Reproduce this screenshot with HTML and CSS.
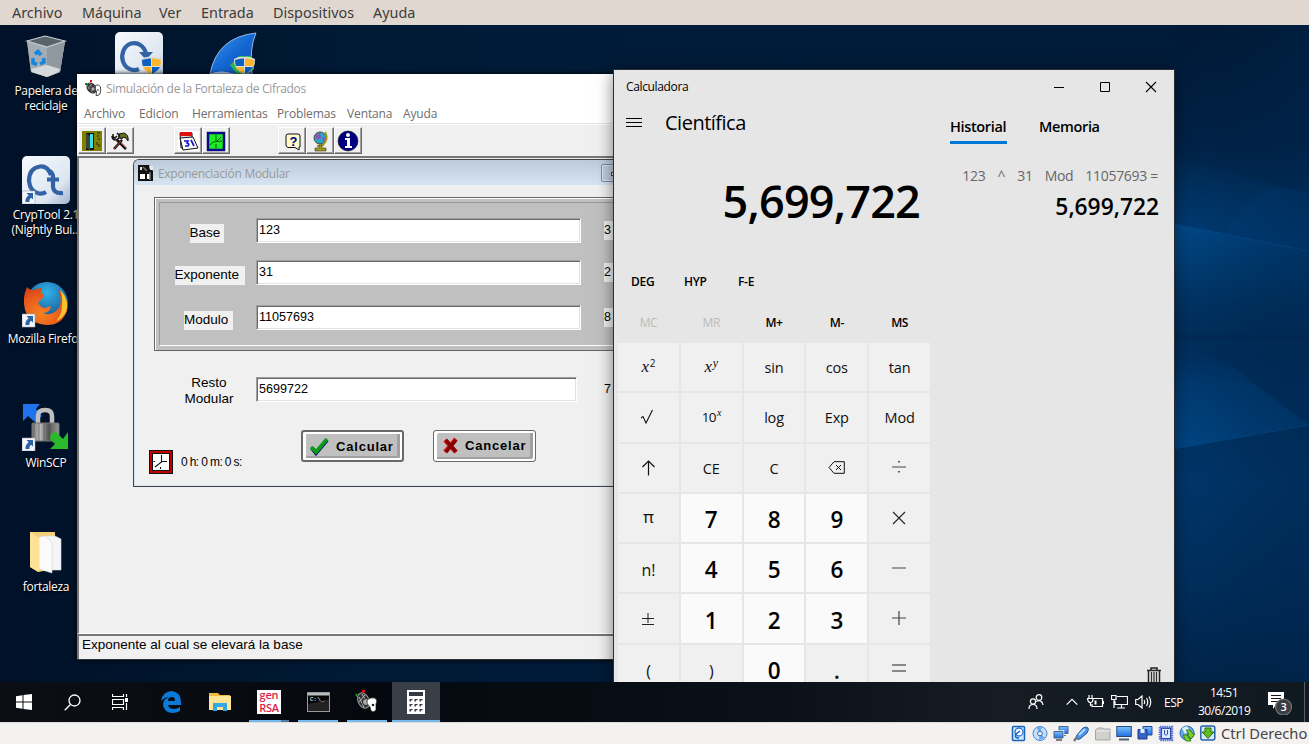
FILE: index.html
```html
<!DOCTYPE html>
<html lang="es">
<head>
<meta charset="utf-8">
<title>Máquina virtual</title>
<link rel="stylesheet" href="styles.css">
</head>
<body>
<svg class="defs" width="0" height="0">
  <defs>
    <linearGradient id="sky" x1="0" x2="1" y1="0" y2="0"><stop offset="0" stop-color="#001128"/><stop offset=".3" stop-color="#001a36"/><stop offset=".6" stop-color="#001c3a"/><stop offset="1" stop-color="#001b38"/></linearGradient>
    <linearGradient id="side" x1="0" x2="0" y1="0" y2="1"><stop offset="0" stop-color="#001935"/><stop offset=".18" stop-color="#002248"/><stop offset=".3" stop-color="#003463"/><stop offset=".5" stop-color="#002e5d"/><stop offset=".7" stop-color="#00376c"/><stop offset=".85" stop-color="#002f5e"/><stop offset="1" stop-color="#00244a"/></linearGradient>
    <linearGradient id="beam1" x1="0" x2="0" y1="0" y2="1"><stop offset="0" stop-color="#004a8c"/><stop offset=".5" stop-color="#004078" stop-opacity=".7"/><stop offset="1" stop-color="#003468" stop-opacity="0"/></linearGradient>
    <linearGradient id="beam2" x1="0" x2="0" y1="1" y2="0"><stop offset="0" stop-color="#004787"/><stop offset=".6" stop-color="#00407a" stop-opacity=".7"/><stop offset="1" stop-color="#003468" stop-opacity="0"/></linearGradient>
    <linearGradient id="haze" x1="0" x2="0" y1="0" y2="1"><stop offset="0" stop-color="#003b73" stop-opacity="0"/><stop offset="1" stop-color="#003e79"/></linearGradient>
    <linearGradient id="fade" x1="0" x2="1" y1="0" y2="0"><stop offset="0" stop-color="#001b38" stop-opacity="0"/><stop offset="1" stop-color="#00234a" stop-opacity=".5"/></linearGradient>
    <linearGradient id="tile" x1="0" x2="1" y1="0" y2="1"><stop offset="0" stop-color="#f7fafd"/><stop offset=".7" stop-color="#dde6f1"/><stop offset="1" stop-color="#9fb3cd"/></linearGradient>
    <linearGradient id="fin" x1="0" x2="1" y1="0" y2="1"><stop offset="0" stop-color="#3e9bf0"/><stop offset=".5" stop-color="#1468d2"/><stop offset="1" stop-color="#0c4db0"/></linearGradient>
    <linearGradient id="lock" x1="0" x2="1" y1="0" y2="0"><stop offset="0" stop-color="#777"/><stop offset=".3" stop-color="#bbb"/><stop offset=".6" stop-color="#555"/><stop offset="1" stop-color="#999"/></linearGradient>
    <radialGradient id="fox" cx=".4" cy=".7" r=".8"><stop offset="0" stop-color="#f58220"/><stop offset=".6" stop-color="#e8591c"/><stop offset="1" stop-color="#c93a12"/></radialGradient>
    <radialGradient id="globe" cx=".5" cy=".25" r=".8"><stop offset="0" stop-color="#2fb4ea"/><stop offset="1" stop-color="#153a7c"/></radialGradient>
    <linearGradient id="blu" x1="0" x2="0" y1="0" y2="1"><stop offset="0" stop-color="#7cc0ff"/><stop offset="1" stop-color="#1d6fe0"/></linearGradient>
    <g id="shield"><path d="M0 2Q6-1 10.500 0Q15-1 21 2Q22 12 10.500 18Q-1 12 0 2Z" fill="#ddd"/><path d="M1 3Q6 1 10 1.500V9H1.800Q1 6 1 3ZM11 10H19Q17 14 11 17Z" fill="#fdb62b" transform="translate(21) scale(-1 1)"/><path d="M1 3Q6 1 10 1.500V9H1.800Q1 6 1 3ZM11 10H19Q17 14 11 17Z" fill="#0a5fc0"/></g>
    <g id="shortcut"><rect width="13" height="13" fill="#f5f7fa" stroke="#9aa4b0" stroke-width=".6"/><path d="M4.500 2H11V8.500L9 6.800Q7 8 7.400 11H3.500Q3 7 6.600 4.300Z" fill="#2a63a8"/></g>
    <g id="machine"><ellipse cx="6.500" cy="8" rx="4.500" ry="6" transform="rotate(-35 6.500 8)" fill="#333"/><path d="M2 5L8 13M4 3L10 11M3 9L7 4M6 12L10 6" stroke="#999" stroke-width=".8"/><circle cx="8" cy="9" r="2.200" fill="#aaa" stroke="#222" stroke-width=".8"/><path d="M10.500 5.500Q14 3.500 15.500 7Q16 10 15 14Q13 16 11 15.500L11.500 12Q9.500 9 10.500 5.500Z" fill="#fff" stroke="#333" stroke-width=".9"/><circle cx="13" cy="10" r=".8" fill="#222"/><rect x="0" y="3" width="2" height="2" fill="#087a12"/><rect x="5" y="0" width="2" height="2" fill="#d11"/></g>
  </defs>
</svg>

<nav class="vm-menu"><span class="m1">Archivo</span><span class="m2">Máquina</span><span class="m3">Ver</span><span class="m4">Entrada</span><span class="m5">Dispositivos</span><span>Ayuda</span></nav>

<main class="desktop">
  <svg class="wallpaper" width="1309" height="657" viewBox="0 25 1309 657">
    <rect y="25" width="1309" height="657" fill="url(#sky)"/>
    <rect x="1174" y="25" width="135" height="657" fill="url(#side)"/>
    <path d="M1174 155L1309 195V253L1174 225Z" fill="url(#haze)"/>
    <path d="M1228 225L1264 188L1309 190V252L1232 237Z" fill="#00478a" opacity=".25"/>
    <path d="M1174 224L1309 251V330H1174Z" fill="url(#beam1)"/>
    <path d="M1174 340L1230 365L1309 425L1174 449Z" fill="url(#beam2)"/>
    <path d="M1174 335H1309V339H1174Z" fill="#00264f" opacity=".5"/>
    <path d="M1174 25H1309V682H1174Z" fill="url(#fade)"/>
    <path d="M1174 224L1309 251M1174 449L1309 425" stroke="#0a5798" stroke-width="1" opacity=".35"/>
  </svg>

  <div class="shortcut bin">
    <svg width="48" height="48" viewBox="0 0 48 48"><path d="M5 8L23 3L43 8L38 39L25 44L9 39Z" fill="#8c949b"/><path d="M5 8L25 14L43 8L38 39L25 44L9 39Z" fill="#a5adb4"/><path d="M25 14L43 8L38 39L25 44Z" fill="#8f979f"/><path d="M9 36L25 32L38 36L37 39L25 44L10 39Z" fill="#d6d9dc"/><path d="M5 8L23 3L43 8L25 14Z" fill="#59636c" stroke="#c5cbd0" stroke-width="1.200"/><path d="M13 21L16 18.500L19 22M11 25L11 30L15 31.500M18 31L22 29L21.500 25" fill="none" stroke="#1686dd" stroke-width="3.600"/></svg>
    <p>Papelera de<br>reciclaje</p>
  </div>
  <div class="shortcut top1"><svg width="48" height="48" viewBox="0 0 48 48"><rect width="48" height="48" rx="5" fill="url(#tile)"/><path d="M31 22A12 13.500 0 1 0 24 37" fill="none" stroke="#3463a5" stroke-width="4.200"/><path d="M24 20H38L31 28Z" fill="#3463a5"/><use href="#shield" x="26" y="25"/></svg></div>
  <div class="shortcut top2"><svg width="48" height="48" viewBox="0 0 48 48"><path d="M1 42Q8 5 47 1Q40 17 43 42Z" fill="url(#fin)" stroke="#b7d4f2" stroke-width=".8"/><path d="M0 42Q12 37 26 42Z" fill="#bcd3ef"/><path d="M21 33L30 24H43L45 37L38 42H28Z" fill="#29b44b"/><use href="#shield" x="25" y="25"/></svg></div>
  <div class="shortcut crypt">
    <svg width="48" height="48" viewBox="0 0 48 48"><rect width="48" height="48" rx="5" fill="url(#tile)"/><path d="M29 19Q26 10 18 10.500Q7 12 7 25Q8 36 17 37.500Q21 38 24 36M25 14Q30 15 31 20V31Q32 38 41 37M25 23.500H37" fill="none" stroke="#3463a5" stroke-width="4.200"/><use href="#shortcut" x="0" y="35"/></svg>
    <p>CrypTool 2.1<br>(Nightly Bui...</p>
  </div>
  <div class="shortcut firefox">
    <svg width="48" height="48" viewBox="0 0 48 48"><circle cx="25" cy="23" r="21" fill="url(#globe)"/><path d="M5 7Q9 12 14 9L20 8Q17 12 22 15L20 19L16 22Q18 28 24 28Q28 25 29 27Q27 33 21 33Q29 37 37 28Q41 20 36 10Q48 18 45 31Q40 45 25 45Q8 44 3 30Q0 17 5 7Z" fill="url(#fox)"/><path d="M38 10Q48 19 44 32Q40 39 34 41Q40 35 40 26Q41 18 38 10Z" fill="#f8c22c"/><use href="#shortcut" x="0" y="34"/></svg>
    <p>Mozilla Firefox</p>
  </div>
  <div class="shortcut winscp">
    <svg width="48" height="48" viewBox="0 0 48 48"><path d="M1 1H18L14 6L20 13L13 19L6 13L1 18Z" fill="#1f74ee"/><path d="M16 22V13Q16 7 23 7Q30 7 30 13V22" fill="none" stroke="#bfbfbf" stroke-width="4.500"/><rect x="10" y="20" width="27" height="18" rx="1" fill="url(#lock)" stroke="#777"/><path d="M12 20V38M17 20V38M22 20V38M28 20V38" stroke="#444" opacity=".5"/><path d="M29 30L34 29L41 36L46 29V46H28L33 41L28 36Z" fill="#2ab92b"/><use href="#shortcut" x="0" y="35"/></svg>
    <p>WinSCP</p>
  </div>
  <div class="shortcut folder">
    <svg width="48" height="48" viewBox="0 0 48 48"><path d="M8 3H33V40L16 43L8 38Z" fill="#f4cf76"/><path d="M19 7L33 7L39 10V41L28 41Z" fill="#f4f5f6" stroke="#d6d8da" stroke-width=".6"/><path d="M17 8L24 7L30 14V44L17 40Z" fill="#fbfbfb" stroke="#cfd3d6" stroke-width=".6"/><path d="M8 3L17 9V43L8 38Z" fill="#ffe196"/></svg>
    <p>fortaleza</p>
  </div>

  <section class="app">
    <header class="app-title"><svg width="17" height="17" viewBox="0 0 17 17"><use href="#machine"/></svg><span>Simulación de la Fortaleza de Cifrados</span></header>
    <nav class="app-menu"><span class="a1">Archivo</span><span class="a2">Edicion</span><span class="a3">Herramientas</span><span class="a4">Problemas</span><span class="a5">Ventana</span><span>Ayuda</span></nav>
    <div class="toolbar">
      <i><svg width="22" height="22" viewBox="0 0 22 22"><path d="M1 1H21V21H1Z" fill="#808000"/><path d="M5 3H13V20H5Z" fill="#111"/><path d="M9 4H12V18H9Z" fill="#3be0e8"/><path d="M5 3L9 6V20L5 18Z" fill="#3c4638"/><path d="M16 3H19M16 6H18M17 9H19M16 12V15M18 14V17" stroke="#222"/></svg></i>
      <i><svg width="22" height="22" viewBox="0 0 22 22"><path d="M5 19L13 10M17 19L8 10" stroke="#111" stroke-width="2.600"/><path d="M5 19L12 11M12 13L17 18" stroke="#c23a3a" stroke-width="1"/><path d="M4 4V7L6 8L8 6M3 6Q3 10 7 10L10 8V5L8 3" fill="none" stroke="#111" stroke-width="1.500"/><path d="M10 4L15 3Q20 5 19 11L17 8L14 7L13 9L11 8Z" fill="#6d6d20" stroke="#111"/></svg></i>
      <i class="gap1"><svg width="22" height="22" viewBox="0 0 22 22"><path d="M1 1H22V21H1Z" fill="#fff"/><path d="M3 3H15V18H4Z" fill="#ddd" stroke="#111"/><path d="M3 2H15V6H3Z" fill="#e01010"/><path d="M3 8L16 7L21 18L6 20Z" fill="#fff" stroke="#111"/><path d="M7 11H11L10 13Q13 14 11 16H8M14 10L17 16" fill="none" stroke="#1515c9" stroke-width="1.700"/></svg></i>
      <i><svg width="22" height="22" viewBox="0 0 22 22"><rect x="3" y="3" width="16" height="17" fill="#1bec25" stroke="#0a0a85" stroke-width="2.500"/><path d="M11 5V11M11 14V18M5 15L8 12L17 11M11 12L16 7" stroke="#075b10" fill="none"/></svg></i>
      <i class="gap2"><svg width="22" height="22" viewBox="0 0 22 22"><path d="M7 4H17Q19 4 19 6V17H18L18 20L14 17.500H7Q5 17 5 15V6Q5 4 7 4Z" fill="#fff9cb" stroke="#111"/><text x="8.500" y="15.500" class="question">?</text></svg></i>
      <i><svg width="22" height="22" viewBox="0 0 22 22"><circle cx="11" cy="8" r="6" fill="#27a7cc" stroke="#444"/><path d="M6 5L11 3L12 8L8 10ZM13 8L17 7L15 13Z" fill="#8a55b4"/><path d="M16 2Q20 9 14 15L8 16" fill="none" stroke="#a19a12" stroke-width="2"/><path d="M10 15H13V18H17V21H6V18H10Z" fill="#a19a12" stroke="#333" stroke-width=".6"/></svg></i>
      <i><svg width="22" height="22" viewBox="0 0 22 22"><circle cx="11" cy="11" r="10" fill="#00007e" stroke="#111" stroke-width=".6"/><circle cx="11" cy="5" r="2" fill="#fff"/><path d="M8 8H13V16H15V18H8V16H10V10H8Z" fill="#fff"/></svg></i>
    </div>
    <div class="mdi">
      <div class="child">
        <header class="child-title"><svg width="15" height="16" viewBox="0 0 15 16"><path d="M0 0H11L15 6V16H0Z" fill="#111"/><path d="M2 9H7V14H2ZM9 9H12V14H9Z" fill="#fff"/><path d="M2 2H4V5H2ZM11 1H15V5H12Z" fill="#e8e8e8"/><path d="M5 2L9 6M12 7V15" stroke="#777" stroke-width="1.500"/></svg><span>Exponenciación Modular</span><b><i></i></b></header>
        <div class="panel">
          <div class="row r1"><div class="cell"><label class="base">Base</label></div><div class="field">123</div><em>3</em></div>
          <div class="row r2"><div class="cell"><label class="exp">Exponente</label></div><div class="field">31</div><em>2</em></div>
          <div class="row r3"><div class="cell"><label class="mod">Modulo</label></div><div class="field">11057693</div><em>8</em></div>
        </div>
        <div class="result"><div class="rest">Resto<br>Modular</div><div class="field">5699722</div><em>7</em></div>
        <div class="actions">
          <div class="timer"><svg width="26" height="26" viewBox="0 0 26 26"><rect x="1.500" y="1.500" width="23" height="23" fill="#c00000" stroke="#111"/><rect x="4.500" y="4.500" width="17" height="17" fill="#fff" stroke="#111"/><path d="M13.500 6V13L7 18M13 12.500H19M12.500 18V20M5.500 12.500H7" fill="none" stroke="#111" stroke-width="1.100"/></svg><span>0 h: 0 m: 0 s:</span></div>
          <button class="go"><svg width="20" height="18" viewBox="0 0 20 18"><path d="M2 10L6 15L17 2" fill="none" stroke="#00007e" stroke-width="4"/><path d="M1 9L6 14L17 1" fill="none" stroke="#0a9c14" stroke-width="3.600"/></svg>Calcular</button>
          <button class="no"><svg width="18" height="18" viewBox="0 0 18 18"><path d="M3 3L14 15M14 2L3 15" stroke="#d31818" stroke-width="4.600"/><path d="M4 3L14 15M14 3L4 15" stroke="#850000" stroke-width="3.500"/></svg>Cancelar</button>
        </div>
      </div>
    </div>
    <footer class="app-status">Exponente al cual se elevará la base</footer>
  </section>

  <section class="calc">
    <div class="calc-main">
      <div class="calc-title">Calculadora</div>
      <div class="mode"><svg width="16" height="12" viewBox="0 0 16 12"><path d="M0 1.500H16M0 5.500H16M0 9.500H16" stroke="#000" shape-rendering="crispEdges"/></svg><span>Científica</span></div>
      <div class="display">5,699,722</div>
      <div class="modes"><span class="d1">DEG</span><span class="d2">HYP</span><span>F-E</span></div>
      <div class="memory"><span class="off">MC</span><span class="off">MR</span><span>M+</span><span>M-</span><span>MS</span></div>
      <div class="keys">
        <span><i class="math">x</i><sup>2</sup></span><span><i class="math">x</i><sup class="math">y</sup></span><span>sin</span><span>cos</span><span>tan</span>
        <span class="root"><svg width="14" height="16" viewBox="0 0 14 16"><path d="M1 9L3 7.500L6 14L12.500 1" fill="none" stroke="#111" stroke-width="1.100"/></svg></span><span class="ten">10<sup class="math">x</sup></span><span class="low">log</span><span class="low">Exp</span><span class="low">Mod</span>
        <span><svg width="14" height="16" viewBox="0 0 14 16"><path d="M7.500 15.500V1.500M1.500 7L7.500 1L13.500 7" fill="none" stroke="#111" stroke-width="1.200"/></svg></span><span class="low">CE</span><span class="low">C</span><span><svg width="17" height="13" viewBox="0 0 17 13"><path d="M6 .7H16.300V12.300H6L1 6.500ZM8 4L13 9M13 4L8 9" fill="none" stroke="#111"/></svg></span><span class="op"><svg width="16" height="14" viewBox="0 0 16 14"><path d="M1 7H15" stroke="#444"/><path d="M7.200 1H8.800V2.600H7.200ZM7.200 11H8.800V12.600H7.200Z" fill="#333"/></svg></span>
        <span class="pi">π</span><span class="n">7</span><span class="n">8</span><span class="n">9</span><span class="op"><svg width="14" height="14" viewBox="0 0 14 14"><path d="M1 1L13 13M13 1L1 13" stroke="#222" stroke-width="1.100"/></svg></span>
        <span class="fact">n!</span><span class="n">4</span><span class="n">5</span><span class="n">6</span><span class="op"><svg width="16" height="14" viewBox="0 0 16 14"><path d="M1 7H15" stroke="#444"/></svg></span>
        <span><svg width="12" height="15" viewBox="0 0 12 15"><path d="M0 7.500H12M6 2V12M0 13.500H12" stroke="#222"/></svg></span><span class="n">1</span><span class="n">2</span><span class="n">3</span><span class="op"><svg width="16" height="14" viewBox="0 0 16 14"><path d="M1 7H15M8 0V14" stroke="#444" stroke-width="1.200"/></svg></span>
        <span class="par">(</span><span class="par">)</span><span class="n">0</span><span class="dot">.</span><span class="op"><svg width="16" height="14" viewBox="0 0 16 14"><path d="M1 4H15M1 10H15" stroke="#222"/></svg></span>
      </div>
    </div>
    <aside class="history">
      <div class="controls"><svg width="104" height="12" viewBox="0 0 104 12"><path d="M0 6.500H10" stroke="#000"/><path d="M46.500 1.500H55.500V10.500H46.500Z" fill="none" stroke="#000"/><path d="M92 1L102 11M102 1L92 11" stroke="#000" stroke-width="1.100"/></svg></div>
      <div class="tabs"><span class="on">Historial</span><span class="mem">Memoria</span></div>
      <div class="expr"><span>123</span><span>^</span><span>31</span><span>Mod</span><span>11057693 =</span></div>
      <div class="answer">5,699,722</div>
      <svg class="trash" width="16" height="16" viewBox="0 0 16 16"><path d="M1 3.500H15M5 3V1H11V3M2.500 4V16M13.500 4V16" fill="none" stroke="#222" stroke-width="1.500"/><path d="M5.500 5V16M8 5V16M10.500 5V16" stroke="#333" stroke-width="1.300"/></svg>
    </aside>
  </section>
</main>

<footer class="taskbar">
  <div class="tb"><svg width="16" height="16" viewBox="0 0 16 16"><path d="M0 2.200L6.500 1.300V7.500H0ZM7.500 1.100L16 0V7.500H7.500ZM0 8.500H6.500V14.700L0 13.800ZM7.500 8.500H16V16L7.500 14.900Z" fill="#fff"/></svg></div>
  <div class="tb"><svg width="17" height="17" viewBox="0 0 17 17"><circle cx="10.500" cy="6.500" r="5.500" fill="none" stroke="#fff" stroke-width="1.300"/><path d="M6.500 10.500L.7 16.300" stroke="#fff" stroke-width="1.300"/></svg></div>
  <div class="tb"><svg width="17" height="16" viewBox="0 0 17 16"><path d="M.5 0V2.500H11.500V0M.5 16V13.500H11.500V16M.5 5.500H11.500V10.500H.5ZM14.500 0V3M14.500 9V16" fill="none" stroke="#fff" stroke-width="1.200"/><path d="M13 4H16V8H13Z" fill="#fff"/></svg></div>
  <div class="tb app1"><svg width="22" height="22" viewBox="0 0 22 22"><path d="M1 10Q3 0 12 0Q21 1 21 12V14H8Q9 18 14 18Q17 18 20 16V20Q17 22 12 22Q4 21 3 14Q3 8 9 6Q5 6 1 10ZM8 10H15Q15 6 12 6Q8 6 8 10Z" fill="#0b79d8"/></svg></div>
  <div class="tb app2"><svg width="22" height="20" viewBox="0 0 22 20"><path d="M0 1H9L11 3H21V18H0Z" fill="#f0b93f"/><path d="M0 4H22V18H0Z" fill="#ffe595"/><path d="M4 19V11H18V19H14V15H8V19Z" fill="#35a7e2"/></svg></div>
  <div class="tb app2 run"><div class="gen"><span>gen</span><span>RSA</span></div><u class="dual"></u></div>
  <div class="tb app2 run"><svg width="23" height="20" viewBox="0 0 23 20"><rect x=".5" y=".5" width="22" height="19" fill="#050505" stroke="#999"/><path d="M1 1H22V3.500H1Z" fill="#bbb"/><path d="M1 19V12Q12 10 22 7V19Z" fill="#222"/><text x="3" y="9" class="cmd">C:\_</text></svg><u></u></div>
  <div class="tb app2 run"><svg width="24" height="24" viewBox="0 0 24 24"><ellipse cx="8.500" cy="10.500" rx="5.500" ry="8" transform="rotate(-25 8.500 10.500)" fill="#333" stroke="#999"/><path d="M4 7L9 17M7 4L13 15M4 12L10 5" stroke="#bbb"/><circle cx="11" cy="12" r="3.500" fill="#aaa" stroke="#222"/><path d="M12 10Q15 7 20 8Q23 10 21 14V20Q19 23 16 21L15 17Q11 14 12 10Z" fill="#fff" stroke="#111" stroke-width=".7"/><circle cx="18" cy="15" r="1.300" fill="#222"/><path d="M0 5H3M1.500 3.500V6.500" stroke="#0a9a1a"/><rect x="7" y="0" width="3" height="2.500" fill="#d11"/></svg><u></u></div>
  <div class="tb app2 active"><svg width="18" height="24" viewBox="0 0 18 24"><path d="M0 0H18V24H0Z" fill="#fff"/><path d="M2 2H16V6H2Z" fill="#353942"/><path d="M2.500 9H5.500V10.200H4V11.500H2.500ZM7.500 9H10.500V10.200H9V11.500H7.500ZM12.500 9H15.500V10.200H14V11.500H12.500ZM2.500 14H5.500V15.200H4V16.500H2.500ZM7.500 14H10.500V15.200H9V16.500H7.500ZM12.500 14H15.500V15.200H14V16.500H12.500ZM2.500 19H5.500V20.200H4V21.500H2.500ZM7.500 19H10.500V20.200H9V21.500H7.500ZM12.500 19H15.500V20.200H14V21.500H12.500Z" fill="#353942"/></svg><u></u></div>
  <div class="tray">
    <svg class="people" width="16" height="16" viewBox="0 0 16 16"><circle cx="5" cy="7.500" r="2.600"/><path d="M1 15Q1 10.500 5 10.500Q9 10.500 9 15"/><circle cx="11" cy="3.500" r="2.800"/><path d="M8 7.500Q14 5 15 11"/></svg>
    <svg class="chev" width="12" height="8" viewBox="0 0 12 8"><path d="M.7 6.700L6 1.400L11.300 6.700"/></svg>
    <svg class="power" width="17" height="14" viewBox="0 0 17 14"><path d="M6 3.500H15.500V11.500H5V9M16.500 6V9M2 0V3M5 0V3M.5 3.500H6Q6 7.500 3.500 7.500Q1 7.500 .5 3.500ZM3.500 7V11"/><path d="M7.500 5.500H9.500V9.500H7.500Z" fill="#fff" stroke="none"/></svg>
    <svg class="net" width="17" height="14" viewBox="0 0 17 14"><path d="M6 1.500H16.500V9.500H4V6M10.500 10V12.500M6 13H14M.5 .5H5V4.500H.5ZM3 5V13"/></svg>
    <svg class="vol" width="18" height="14" viewBox="0 0 18 14"><path d="M.7 4.500H3L7 1V13L3 9.500H.7ZM9 5Q10.500 7 9 9M11.500 3Q14 7 11.500 11M14 1.500Q17.500 7 14 12.500"/></svg>
    <span class="lang">ESP</span>
    <span class="clock">14:51<br>30/6/2019</span>
    <svg class="note" width="26" height="24" viewBox="0 0 26 24"><path d="M0 1H16V14H8L5 18V14H0Z" fill="#fff" stroke="none"/><path d="M3 4.500H13M3 7.500H13M3 10.500H10" stroke="#11151b"/><circle cx="15.500" cy="16" r="8" fill="#3a3d42" stroke="#777"/><text x="12.500" y="20" class="badge">3</text></svg>
    <i class="peek"></i>
  </div>
</footer>

<footer class="vm-status">
  <svg width="205" height="18" viewBox="0 0 205 18">
    <g><rect x="1.500" y="1.500" width="12" height="14" rx="1" fill="#cfe6fb" stroke="#1a63bb" stroke-width="1.500"/><circle cx="8" cy="7" r="4" fill="#fff" stroke="#2a78cc" stroke-width="1.300"/><path d="M9 6L5 9Q3 13 8 13" fill="none" stroke="#1a63bb" stroke-width="1.500"/></g>
    <g transform="translate(21)"><circle cx="8" cy="8.500" r="7" fill="#c6defa" stroke="#4787d3"/><path d="M8 8L4 2L10 1.500ZM8 8L13 13L7 15Z" fill="#6ba9ef"/><circle cx="8" cy="8.500" r="2.300" fill="#fff" stroke="#2a66b5"/></g>
    <g transform="translate(42)"><path d="M6 1.500H15V8.500H6Z" fill="url(#blu)" stroke="#4b6789"/><path d="M1 6.500H10V13H1Z" fill="url(#blu)" stroke="#f4f2f0" stroke-width="2.500"/><path d="M1 6.500H10V13H1Z" fill="url(#blu)" stroke="#4b6789"/><path d="M3 15H9M12 10V11" stroke="#555" stroke-width="1.500"/></g>
    <g transform="translate(63)"><path d="M3 10L9 3Q12 1 14 3Q15 5 13 8L6 14Q3 15 2 13Z" fill="#4c94e5" stroke="#1d559f"/><path d="M5 10L11 4" stroke="#b4daff" stroke-width="2"/><path d="M3 12L0 16" stroke="#777" stroke-width="2.500"/></g>
    <g transform="translate(84)"><path d="M.5 5L3 3H8L9 4H15V15H.5Z" fill="#d0d0ce" stroke="#a5a5a2"/><path d="M1 6H15" stroke="#eee"/></g>
    <g transform="translate(105)"><rect x=".8" y="1.500" width="14.500" height="10" fill="url(#blu)" stroke="#264a77"/><path d="M3 14.500H13" stroke="#4e6177" stroke-width="2"/></g>
    <g transform="translate(126)"><path d="M6 1.500H15V10H6Z" fill="url(#blu)" stroke="#264a9a"/><path d="M1 4.500H10V14H1Z" fill="#3862c4" stroke="#1c3c8c"/><path d="M3.500 4H7.500V8H3.500Z" fill="#e0ecff"/></g>
    <g transform="translate(147)"><rect x="2" y="2" width="12" height="13" fill="#7ba4f4" stroke="#5b74d6" stroke-width="2.500" stroke-dasharray="1.500 .7"/><rect x="3.500" y="3.500" width="9" height="10" fill="#dce8ff" stroke="#344cae"/><path d="M6.500 5V9Q8 12 9.500 9V5" fill="none" stroke="#344cae"/></g>
    <g transform="translate(168)"><circle cx="8" cy="8" r="7" fill="#61a8ed" stroke="#2864a8"/><path d="M3 3L8 1L10 5L6 9Z" fill="#e1f0ff"/><path d="M7 5L11 5L14 9H16L12 14L8 9H10ZM4 10H8L12 16H7Z" fill="#7fd025" stroke="#266c18" stroke-width=".8"/></g>
    <g transform="translate(189)"><rect x=".8" y="1" width="14" height="14" rx="2" fill="#d7e8f7" stroke="#2563ac" stroke-width="1.500"/><path d="M5 3H11V7H14L8 13.500L2 7H5Z" fill="#61bd1d" stroke="#25730e"/></g>
  </svg>
  <span>Ctrl Derecho</span>
</footer>
</body>
</html>
```
FILE: styles.css
```css
*{box-sizing:border-box}
body{margin:0;width:1309px;height:744px;overflow:hidden;font-family:"Open Sans","Noto Sans",sans-serif;font-size:12px;display:flex;flex-direction:column}
p{margin:0}
i,em{font-style:normal}
svg{display:block;flex:none}
.defs{position:absolute}

/* Host menu bar */
.vm-menu{height:25px;flex:none;background:#e0d8d0;display:flex;padding-left:12px;font:14.400px/25px "Noto Sans",sans-serif;color:#3c3c3c}
.m1{width:70px}.m2{width:77px}.m3{width:42px}.m4{width:72px}.m5{width:100px}

/* Guest desktop */
.desktop{position:relative;height:657px;flex:none;overflow:hidden;background:#001128}
.wallpaper{position:absolute;left:0;top:0}
.shortcut{position:absolute;width:96px;left:-2px;display:flex;flex-direction:column;align-items:center;color:#fff;text-align:center;line-height:15px;letter-spacing:-.3px;text-shadow:0 1px 2px #000,1px 1px 1px #000;white-space:nowrap}
.shortcut p{margin-top:3px}
.bin{top:8px}.bin p{margin-top:2px}
.top1{left:91px;top:7px}
.top2{left:185px;top:7px}
.crypt{top:131px}
.firefox{top:255px}
.winscp{top:378px}.winscp p{margin-top:4px}
.folder{top:504px;letter-spacing:-.3px}.folder p{margin-top:2px}

/* Encryption strength application */
.app{position:absolute;left:77px;top:49px;width:600px;height:586px;background:#f0f0f0;border-bottom:1px solid #333;box-shadow:0 0 5px #000;display:flex;flex-direction:column}
.app-title{height:29px;flex:none;background:#fff;display:flex;align-items:center;gap:4px;padding-left:8px;color:#999;letter-spacing:-.33px}
.app-menu{height:20px;flex:none;background:#fff;display:flex;padding-left:7px;line-height:22px;color:#6d6d6d;letter-spacing:-.12px}
.a1{width:55px}.a2{width:53px}.a3{width:85px}.a4{width:70px}.a5{width:56px}
.toolbar{height:33px;flex:none;display:flex;padding:3px 0 0 1px;border-top:1px solid #e3e3e3;box-shadow:inset 0 1px #fff}
.toolbar i{width:28px;height:27px;background:#f0f0f0;border:1px solid;border-color:#fff #696969 #696969 #fff;box-shadow:inset -1px -1px #a0a0a0;padding:2px}
.toolbar .gap1{margin-left:40px}.toolbar .gap2{margin-left:48px}
.question{font:bold 13px "Liberation Sans",sans-serif;fill:#00007e}
.mdi{height:478px;flex:none;border:1px solid #a0a0a0;border-width:2px 0 1px 2px;border-top-color:#777;border-left-color:#777;border-bottom-color:#fff;padding:1px 0 0 54px}
.child{height:328px;border:1px solid #444;border-right:0;border-radius:6px 0 0 0;background:#f0f0f0;box-shadow:inset 1px -1px #d7e4f2;font-family:"Liberation Sans",sans-serif}
.child-title{height:25px;background:linear-gradient(#bccad9,#d7e4f2);border-radius:5px 0 0 0;display:flex;align-items:center;padding:1px 0 0 4px;gap:5px;color:#999;font:12px "Open Sans",sans-serif;letter-spacing:-.3px}
.child-title b{width:60px;height:18px;margin-left:306px;border:1px solid #7f8b9c;border-radius:2px;box-shadow:inset 0 0 0 1px #d9e5f2;background:#bfcddb;padding:7px 0 0 9px}
.child-title b i{display:block;width:10px;height:4px;border:1px solid #444;background:#eee}
.panel{height:154px;margin:12px 0 0 20px;border:1px solid #666;border-right:0;background:#c0c0c0;box-shadow:inset 1px 1px #fff;padding:4px 0 4px 4px;display:flex;flex-direction:column;position:relative}
.panel::before{content:"";position:absolute;left:4px;top:4px;right:0;bottom:4px;border:1px solid #999;border-bottom-color:#fff;border-right:0}
.row{height:25px;display:flex;align-items:flex-end;flex:none;position:relative}
.r1{margin-top:16px}.r2{margin-top:17px}.r3{margin-top:20px}
.cell{width:97px;display:flex;justify-content:center}
.cell label{background:#f0f0f0;height:19px;font-size:13.500px;line-height:18px;white-space:nowrap}
.base{width:34px;margin-right:2px}.exp{width:70px}.mod{width:49px;margin-left:2px}
.exp{margin-left:4px}
.field{width:325px;height:25px;flex:none;background:#fff;border:1px solid;border-color:#a0a0a0 #fff #fff #a0a0a0;box-shadow:inset 1px 1px #696969,inset -1px -1px #e3e3e3;font-size:12.600px;line-height:22px;padding-left:2px}
.row em,.result em{margin:0 0 3px 23px;height:19px;background:#f0f0f0;font-size:12.600px;line-height:19px;width:20px}
.result{display:flex;height:32px;margin-top:24px;align-items:center}
.rest{width:106px;margin:0 16px 0 0;padding-left:44px;text-align:center;font-size:13.500px;line-height:16px;flex:none}
.result .field{width:321px;margin-bottom:4px}
.result em{margin-left:27px;margin-bottom:4px}
.actions{display:flex;position:relative;height:50px;margin-top:22px;padding-left:14px}
.timer{display:flex;align-items:center;gap:7px;width:153px;height:26px;margin-top:20px;font-size:12px;letter-spacing:-.62px}
.actions button{width:103px;height:32px;border:2px solid #696969;border-radius:3px;padding:1px 0 0 7px;background:#c0c0c0;box-shadow:inset 3px 2px #fff,inset -2px -2px #fff,inset -5px -4px #a0a0a0;display:flex;align-items:center;font:bold 13px/28px "Liberation Sans",sans-serif;letter-spacing:.8px;gap:6px;color:#000}
.actions .go{margin-top:1px}
.actions .no{margin-left:29px;margin-top:1px;border-width:1px;padding:0 0 1px 8px;gap:5px}
.app-status{height:25px;flex:none;border:1px solid #777;border-width:2px 0 0 2px;font:13.500px/18px "Liberation Sans",sans-serif;padding-left:3px}

/* Calculator */
.calc{position:absolute;left:614px;top:45px;width:560px;height:640px;background:#e6e6e6;box-shadow:0 0 0 1px #2a2f35,0 2px 16px rgba(0,0,0,.55);display:flex}
.calc-main{width:318px;flex:none}
.calc-title{height:34px;padding-left:12px;line-height:34px;letter-spacing:-.35px}
.mode{height:38px;display:flex;align-items:center;padding-left:12px;gap:23px;font-size:20px;line-height:36px;letter-spacing:-.5px}
.display{height:120px;text-align:right;padding-right:12px;font-size:45px;font-weight:600;letter-spacing:-.800px;line-height:117px}
.modes{height:40px;display:flex;line-height:40px;padding-left:17px;font-weight:600;letter-spacing:-.3px}
.d1{width:53px}.d2{width:54px}
.memory{height:41px;display:grid;grid-template-columns:repeat(5,62.800px);padding-left:3px;text-align:center;line-height:42px;font-weight:600;letter-spacing:-.5px}
.off{color:#bbb;font-weight:400}
.keys{display:grid;grid-template-columns:repeat(5,60.800px);grid-auto-rows:48.300px;gap:2px;padding-left:4px}
.keys>span{background:#f0f0f0;display:flex;align-items:center;justify-content:center;font-size:14.500px;letter-spacing:-.2px;color:#111}
.keys .low{padding-top:1px}
.keys .n{background:#fafafa;font-size:22.500px;font-weight:600;color:#000;padding-top:3px}
.keys sup{font-size:10px;line-height:10px;align-self:center;vertical-align:baseline;margin:-8px 0 0 1px}
.math{font:italic 17px "Liberation Serif",serif}
.keys sup.math{font-size:12px}
.keys .ten{font-size:13.500px;letter-spacing:-.6px}
.keys .ten sup.math{font-size:10px}
.keys .root{padding-right:3px}
.keys .op{padding:0 2px 1px 0}
.keys .pi{font-size:17px;padding-bottom:3px}
.keys .fact{font-size:16px;padding-top:3px}
.keys .dot{font-size:22.500px;font-weight:600;padding-top:3px}
.keys .par{padding-top:5px;font-size:16px}
.history{width:242px;position:relative;display:flex;flex-direction:column}
.controls{height:34px;display:flex;align-items:center;justify-content:flex-end;padding:0 16px 1px 0}
.tabs{height:40px;display:flex;padding-left:18px;font-size:14.500px;font-weight:600;letter-spacing:-.35px;line-height:45px}
.on{width:57px;border-bottom:3px solid #0078d7}
.mem{margin-left:32px}
.expr{height:32px;margin-top:16px;display:flex;justify-content:flex-end;gap:12px;padding-right:16px;line-height:32px;font-size:14px;color:#666;letter-spacing:-.3px}
.answer{text-align:right;padding-right:15px;font-size:22.800px;font-weight:600;line-height:30px}
.trash{position:absolute;left:214px;top:597px}

/* Guest taskbar */
.taskbar{height:40px;flex:none;background:linear-gradient(90deg,#0b0f13,#05080f 30%,#0a1118 60%,#151c24 76%,#101820);display:flex;color:#fff}
.tb{width:48px;height:40px;position:relative;display:flex;align-items:center;justify-content:center}
.app1{margin-left:3px}.app2{margin-left:1px}
.tb u{position:absolute;left:4px;bottom:0;width:40px;height:2px;background:#76b9ed}
.tb .dual{border-right:8px solid #4f7ba3}
.tb.active{background:#3a3e46}.tb.active u{left:0;width:48px}
.gen{width:24px;height:24px;background:#fff;color:#d8244c;font:600 11px/12px "Open Sans",sans-serif;display:flex;flex-direction:column;align-items:center;letter-spacing:-.2px}
.gen span{height:12px}
.gen span:first-child{margin-top:-1px;margin-bottom:1px}
.cmd{font:6px "Liberation Mono",monospace;fill:#fff}
.tray{margin-left:auto;display:flex;align-items:center}
.tray svg{fill:none;stroke:#fff;stroke-width:1.200}
.people{margin-right:22px}.chev{margin-right:9px}.power{margin-right:7px}.net{margin-right:7px}.vol{margin-right:11px}
.lang{width:34px;letter-spacing:-.5px}
.clock{width:52px;text-align:center;line-height:18px;letter-spacing:-.5px;white-space:nowrap}
.tray .note{margin-left:18px;margin-top:2px}
.tray .badge{font:600 11px "Open Sans",sans-serif;fill:#fff;stroke:none}
.peek{width:1px;height:40px;background:#555d66;margin:0 4px 0 10px}

/* Host status bar */
.vm-status{height:22px;flex:none;background:#f4f2f0;border-top:1px solid #e0dcd8;display:flex;align-items:center;gap:5px;padding-left:1011px;font:14.700px/20px "Noto Sans",sans-serif;color:#444;white-space:nowrap}
.vm-status span{margin-top:-1px}
```
